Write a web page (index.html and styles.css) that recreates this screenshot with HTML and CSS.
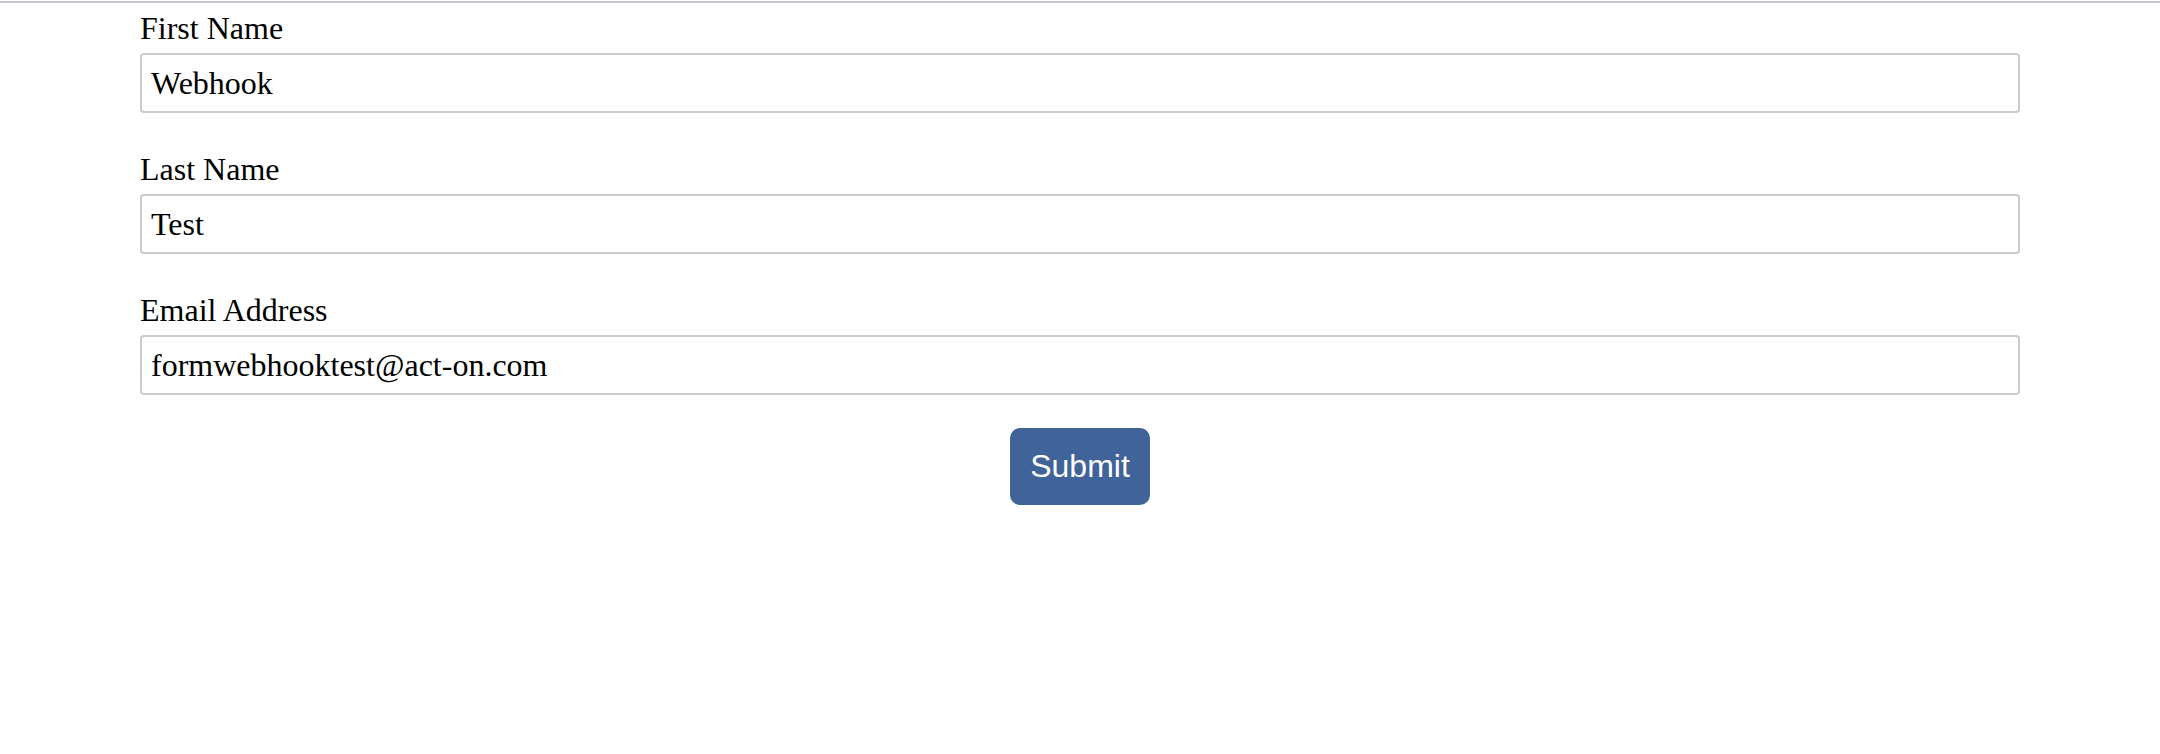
FILE: index.html
```html
<!DOCTYPE html>
<html>
<head>
  <title>Form Webhook Test</title>
  <link rel="stylesheet" href="styles.css">
</head>
<body>
  <form class="form" onsubmit="return false;">
    <div class="field">
      <label for="firstName">First Name</label>
      <input type="text" id="firstName" value="Webhook">
    </div>

    <div class="field">
      <label for="lastName">Last Name</label>
      <input type="text" id="lastName" value="Test">
    </div>

    <div class="field">
      <label for="email">Email Address</label>
      <input type="email" id="email" value="formwebhooktest@act-on.com">
    </div>

    <div class="actions">
      <button type="submit">Submit</button>
    </div>
  </form>
</body>
</html>
```

FILE: styles.css
```css
body { margin: 0; margin-top: 1px; padding-top: 7px; border-top: 2px solid #c6c6d8; background: #fff; font-family: "Liberation Serif", "Times New Roman", serif; font-size: 32px; color: #000; }
.form { max-width: 1880px; margin: 0 auto; }
.field { margin-bottom: 38px; }
.field label { display: block; line-height: 37px; margin-bottom: 6px; }
.field input { display: block; width: 100%; height: 60px; box-sizing: border-box; padding: 0 9px; border: 2px solid #ccc; border-radius: 4px; font-family: "Liberation Serif", "Times New Roman", serif; font-size: 32px; color: #000; background: #fff; outline: none; }
.actions { text-align: center; margin-top: -5px; }
button { padding: 20px 20px; line-height: 37px; background: #40639a; color: #fff; border: none; border-radius: 10px; font-family: "Liberation Sans", Arial, sans-serif; font-size: 32px; cursor: pointer; }
button:hover { background: #365685; }
```
